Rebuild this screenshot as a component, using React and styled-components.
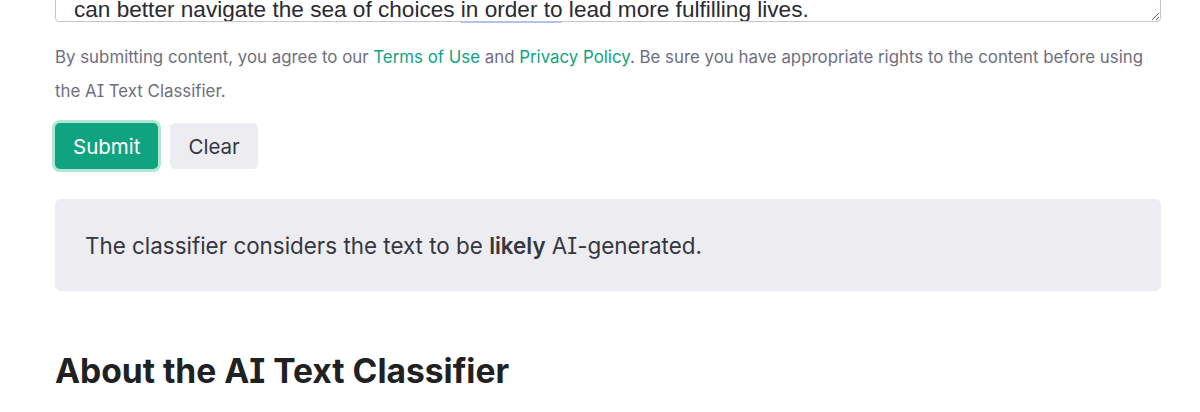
import React from "react";
import styled, { createGlobalStyle } from "styled-components";

const GlobalStyle = createGlobalStyle`
  html, body {
    margin: 0;
    padding: 0;
    background: #ffffff;
  }
  body {
    font-family: Inter, "Noto Sans", "Liberation Sans", sans-serif;
    font-feature-settings: "cv08" 1;
    color: #353740;
    overflow: hidden;
  }
`;

const Page = styled.main`
  width: 1106px;
  padding: 0 0 0 55px;
`;

const Field = styled.div`
  position: relative;
  margin-top: -13px;
`;

const TextArea = styled.textarea`
  display: block;
  box-sizing: border-box;
  width: 100%;
  height: 35px;
  margin: 0;
  padding: 10px 18px 0 18px;
  border: 1px solid #c5c5d2;
  border-radius: 4px;
  font-family: "Liberation Sans", Arial, sans-serif;
  font-size: 22.6px;
  line-height: 24px;
  color: #2a2b32;
  background: #fff;
  resize: vertical;
  overflow: hidden;
  outline: none;
`;

/* squiggle the grammar checker leaves under a phrase */
const GrammarMark = styled.span`
  position: absolute;
  left: ${(p) => p.$left}px;
  top: 34px;
  width: ${(p) => p.$width}px;
  height: 2px;
  background: #b3c3e8;
  border-radius: 1px;
`;

const Terms = styled.p`
  margin: 18px 0 0 0;
  font-size: 16.85px;
  line-height: 34px;
  color: #6e6e80;
`;

const Link = styled.a`
  color: #10a37f;
  text-decoration: none;
`;

const Actions = styled.div`
  display: flex;
  gap: 12px;
  margin-top: 15px;
`;

const Button = styled.button`
  height: 46px;
  padding: 0 18px;
  border: none;
  border-radius: 5px;
  font-family: inherit;
  font-feature-settings: inherit;
  font-size: 20.5px;
  cursor: pointer;
  background: ${(p) => (p.$primary ? "#10a37f" : "#ececf1")};
  color: ${(p) => (p.$primary ? "#ffffff" : "#353740")};
  box-shadow: ${(p) => (p.$primary ? "0 0 0 3px #b0e6d4" : "none")};
`;

const Result = styled.div`
  box-sizing: border-box;
  margin-top: 30px;
  height: 92px;
  padding: 0 30px;
  display: flex;
  align-items: center;
  background: #ececf1;
  border-radius: 6px;
  font-size: 22.4px;
  color: #353740;

  strong {
    font-weight: 600;
  }
`;

const Heading = styled.h2`
  margin: 60px 0 0 0;
  font-size: 33.6px;
  font-weight: 700;
  line-height: 40px;
  color: #202123;
`;

export default function App() {
  return (
    <>
      <GlobalStyle />
      <Page>
        <Field>
          <TextArea
            defaultValue="can better navigate the sea of choices in order to lead more fulfilling lives."
            spellCheck={false}
          />
          <GrammarMark $left={405} $width={102} />
        </Field>
        <Terms>
          By submitting content, you agree to our <Link href="#">Terms of Use</Link> and{" "}
          <Link href="#">Privacy Policy</Link>. Be sure you have appropriate rights to the
          content before using the AI Text Classifier.
        </Terms>
        <Actions>
          <Button $primary>Submit</Button>
          <Button>Clear</Button>
        </Actions>
        <Result>
          <span>
            The classifier considers the text to be <strong>likely</strong> AI-generated.
          </span>
        </Result>
        <Heading>About the AI Text Classifier</Heading>
      </Page>
    </>
  );
}
